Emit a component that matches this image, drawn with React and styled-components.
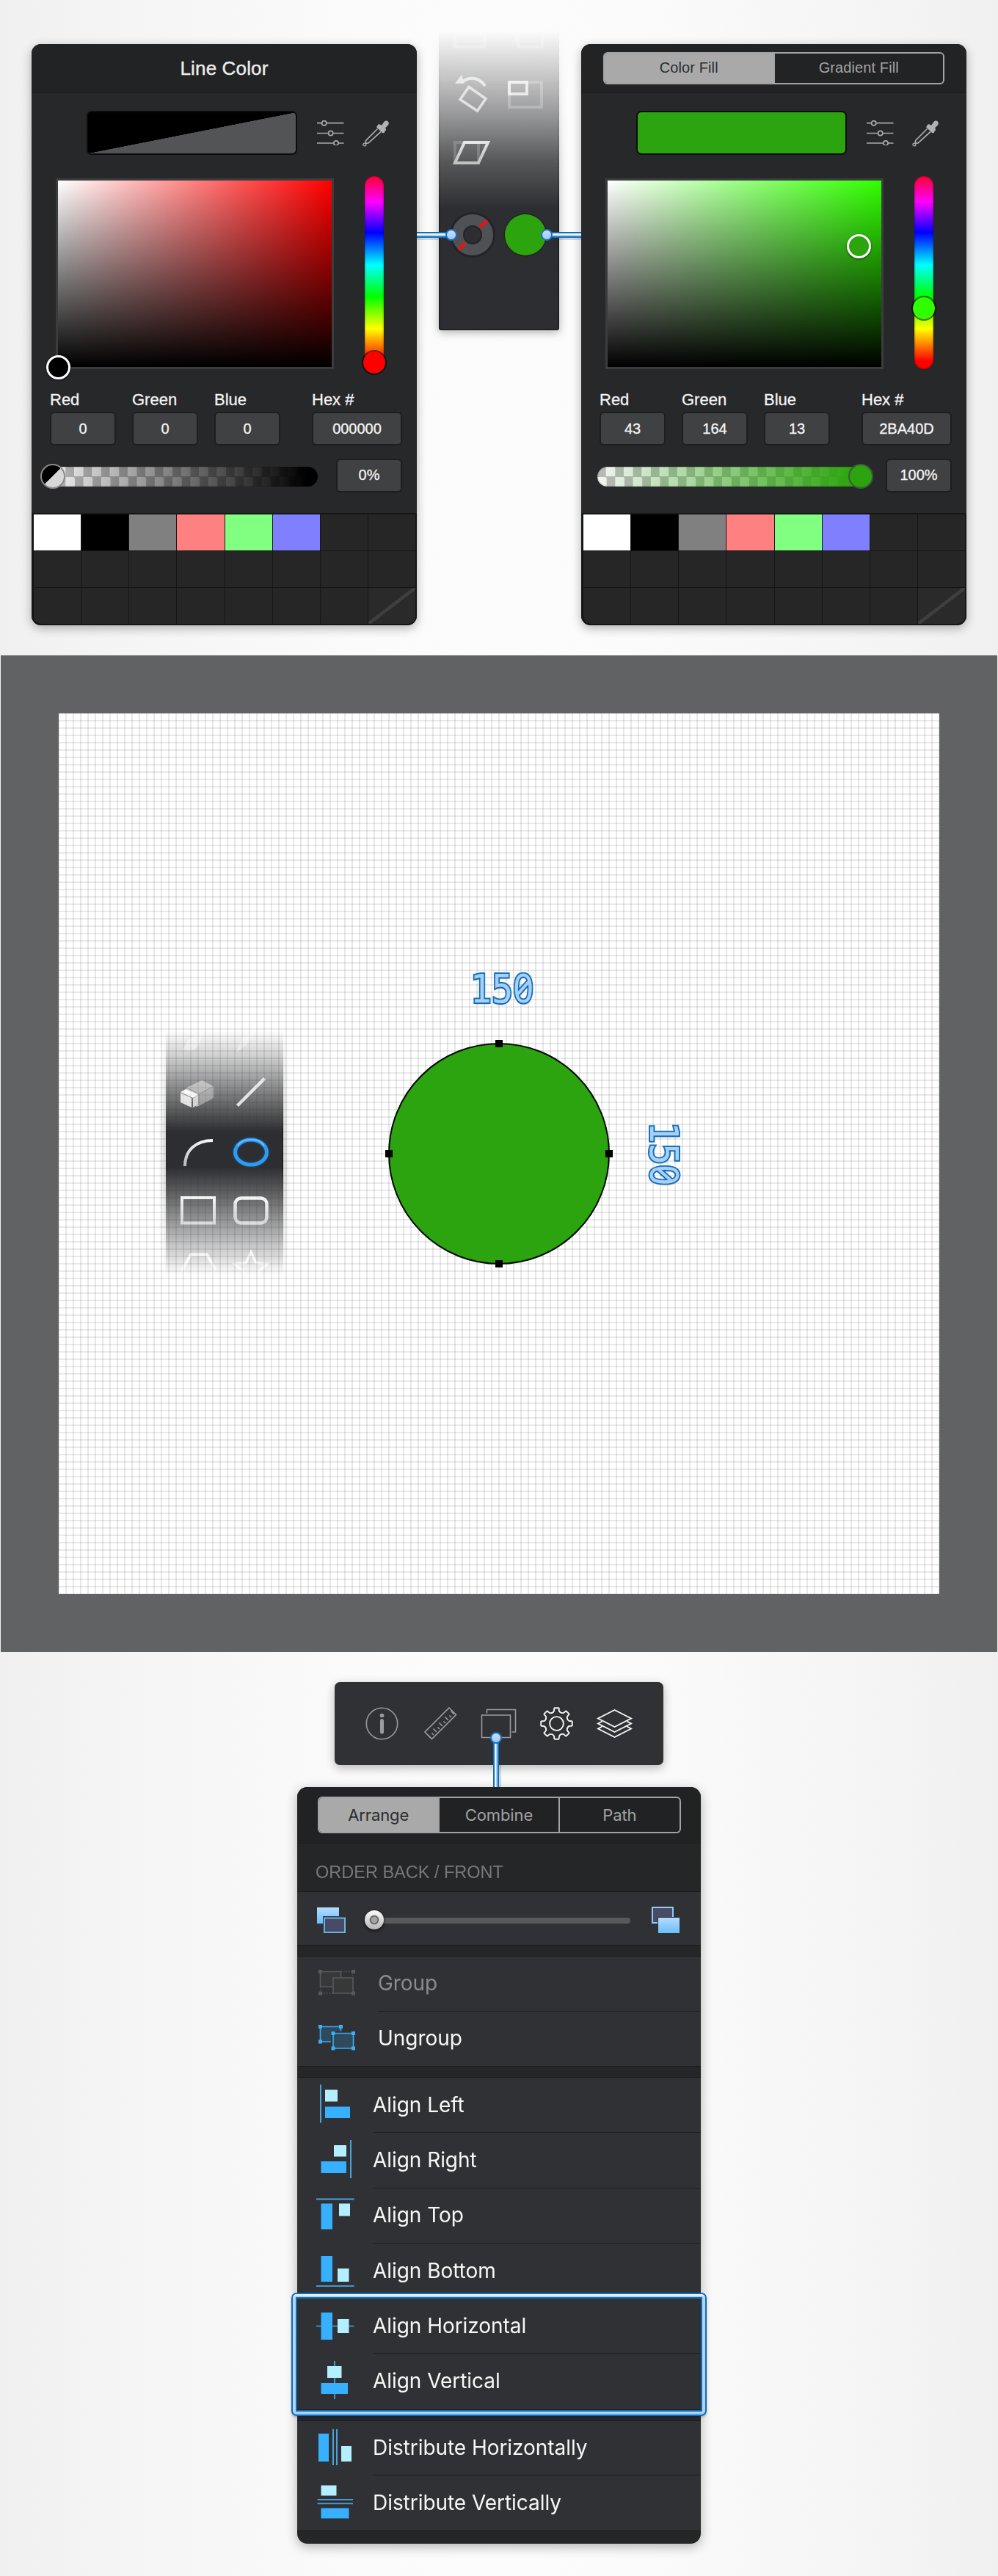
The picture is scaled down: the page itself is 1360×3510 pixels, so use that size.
import React from "react";
import styled, { createGlobalStyle } from "styled-components";

const GlobalStyle = createGlobalStyle`
  *, *::before, *::after { box-sizing: border-box; }
  body { margin: 0; background: #f4f4f4; font-family: "Liberation Sans", Arial, sans-serif; }
  svg { display: block; flex: none; }
`;

const Page = styled.main`
  width: 1360px;
  height: 3510px;
  overflow: hidden;
  display: flex;
  flex-direction: column;
  background: linear-gradient(90deg, #f0f0f0, #f4f4f4 10%, #fbfbfb 36%, #fcfcfc 50%, #fbfbfb 64%, #f4f4f4 90%, #f0f0f0);
`;

/* ---------- colour pickers ---------- */

const PickerSection = styled.section`
  position: relative;
  display: flex;
  align-items: flex-start;
  height: 893px;
  padding: 60px 43px 0;
`;

const Panel = styled.div`
  display: flex;
  flex-direction: column;
  width: 525px;
  height: 792px;
  border-radius: 13px;
  background: #27282a;
  box-shadow: 0 4px 14px rgba(0, 0, 0, 0.3);
`;

const PanelHeader = styled.header`
  display: flex;
  align-items: center;
  justify-content: center;
  height: 67px;
  border-radius: 13px 13px 0 0;
  border-bottom: 2px solid #1f2022;
  background: #222325;
  color: #ececec;
  font-size: 26px;
`;

const PanelTitle = styled.h1`
  margin: 2px 0 0;
  font-size: 26px;
  font-weight: 400;
  letter-spacing: 0.150px;
  -webkit-text-stroke: 0.400px #ececec;
`;

const Tabs = styled.div`
  display: flex;
  width: ${(p) => p.$width}px;
  height: ${(p) => p.$height}px;
  border: 2px solid #a3a3a3;
  border-radius: 6px;
  overflow: hidden;
`;

const Tab = styled.div`
  flex: 1;
  display: flex;
  align-items: center;
  justify-content: center;
  font-family: ${(p) => (p.$inter ? "Inter, sans-serif" : "inherit")};
  font-size: ${(p) => (p.$inter ? 22 : 20)}px;
  letter-spacing: ${(p) => (p.$inter ? "-0.1px" : "0.1px")};
  color: ${(p) => (p.$active ? "#2b2c2e" : "#a3a3a3")};
  background: ${(p) => (p.$active ? "#a9a9a9" : "transparent")};
  & + & { border-left: 2px solid #a3a3a3; }
`;

const SwatchRow = styled.div`
  display: flex;
  align-items: center;
  margin: 24px 0 0 75px;
  height: 60px;
`;

const Swatch = styled.div`
  width: 287px;
  height: 60px;
  margin-right: 27px;
  border: 2px solid #0c0d0e;
  border-radius: 7px;
  background: ${(p) => p.$fill};
`;

const SpectrumRow = styled.div`
  display: flex;
  align-items: center;
  height: 263px;
  margin: 29px 0 0 33px;
`;

const SatBox = styled.div`
  position: relative;
  width: 379px;
  height: 260px;
  margin: 3px 42px 0 0;
  border: 3px solid #3b3c3d;
  background: linear-gradient(to top, #000, transparent), linear-gradient(to right, #fff, ${(p) => p.$hue});
`;

const SatHandle = styled.i`
  position: absolute;
  left: ${(p) => p.$x - 16.5}px;
  top: ${(p) => p.$y - 16.5}px;
  width: 33px;
  height: 33px;
  border: 3px solid #fff;
  border-radius: 50%;
  background: ${(p) => p.$color};
  box-shadow: 0 1px 3px rgba(0, 0, 0, 0.6);
`;

const HueBar = styled.div`
  position: relative;
  width: 26px;
  height: 263px;
  border-radius: 13px;
  background: linear-gradient(to bottom, #f03 0, #f0f 35px, #00f 77px, #0ff 121px, #0f0 164px, #ff0 208px, #f00 252px);
  box-shadow: inset 0 0 3px rgba(0, 0, 0, 0.5);
`;

const HueHandle = styled.i`
  position: absolute;
  left: -4px;
  top: ${(p) => p.$y - 17}px;
  width: 34px;
  height: 34px;
  border: 2px solid rgba(0, 0, 0, 0.55);
  border-radius: 50%;
  background: ${(p) => p.$color};
  background-clip: padding-box;
`;

const FieldRow = styled.div`
  display: flex;
  gap: 22px;
  margin: 26px 0 0 25px;
  & > :last-child { margin-left: 21px; }
`;

const Field = styled.label`
  display: flex;
  flex-direction: column;
  width: ${(p) => p.$width || 90}px;
  color: #f4f4f4;
  font-size: 22px;
  line-height: 32px;
  white-space: nowrap;
  -webkit-text-stroke: 0.300px #f4f4f4;
`;

const FieldName = styled.span`
  height: 32px;
`;

const Value = styled.span`
  display: flex;
  align-items: center;
  justify-content: center;
  width: ${(p) => p.$width || 90}px;
  height: 46px;
  flex: none;
  padding-bottom: 1px;
  border: 2px solid #1d1e1f;
  border-radius: 6px;
  background: #404142;
  color: #f4f4f4;
  font-size: 20px;
  -webkit-text-stroke: 0.300px #f4f4f4;
`;

const AlphaRow = styled.div`
  display: flex;
  align-items: center;
  gap: 25px;
  margin: 18px 0 0 22px;
`;

const AlphaTrack = styled.div`
  position: relative;
  width: 368px;
  height: 27px;
  margin-top: 2px;
  border-radius: 14px;
  background:
    linear-gradient(90deg, transparent, ${(p) => p.$color} 96%),
    repeating-conic-gradient(#f4f4f4 0 25%, #b9b9b9 0 50%) 0 0 / 24.3px 27px;
  box-shadow: inset 0 0 2px rgba(0, 0, 0, 0.5);
`;

const AlphaHandle = styled.i`
  position: absolute;
  left: ${(p) => p.$x - 17}px;
  top: -4px;
  width: 34px;
  height: 34px;
  border: 2px solid ${(p) => p.$edge};
  border-radius: 50%;
  background: ${(p) => p.$fill};
`;

const Palette = styled.div`
  display: grid;
  grid-template-columns: repeat(8, 1fr);
  grid-auto-rows: 49px;
  gap: 1px;
  margin-top: 28px;
  height: 153px;
  padding: 2px 2px 2px 3px;
  overflow: hidden;
  border-radius: 0 0 13px 13px;
  background: #151617;
`;

const Cell = styled.div`
  background: ${(p) => p.$color || "#262626"};
  &:nth-child(17) { border-bottom-left-radius: 10px; }
  &:last-child { border-bottom-right-radius: 10px; }
`;

const SlidersIcon = () => (
  <svg width="37" height="34" viewBox="0 0 37 34" fill="none" stroke="#a9a9a9" strokeWidth="1.7">
    <path d="M0 3.7h6.5M13 3.7h23.5M0 17.5h15.5M22 17.5h14.5M0 31h23M29 31h7.5" />
    <circle cx="9.7" cy="3.7" r="3.1" />
    <circle cx="18.7" cy="17.5" r="3.1" />
    <circle cx="26" cy="31" r="3.1" />
  </svg>
);

const DropperIcon = () => (
  <svg width="36" height="37" viewBox="0 0 36 37">
    <path d="M20 9c1.500-4 4-2.700 6-1l3-4.500c3-4 8-1.500 6.500 3-1 2-3 3.300-4.500 5 2 2.500 1 3.500-.8 4.300.6 2.700-2.200 3.200-4 1.400L19.500 10.800c-.6-.6-.4-1.300.5-1.800z" fill="#b2b2b2" />
    <path d="M20.500 12.500L4.700 28.300l-.7 4 4-.4L25 16.500" fill="none" stroke="#a9a9a9" strokeWidth="1.7" />
    <circle cx="2.900" cy="34" r="1.900" fill="none" stroke="#a9a9a9" strokeWidth="1.400" />
  </svg>
);

const SWATCHES = ["#fff", "#000", "#808080", "#ff8080", "#80ff80", "#8080ff"];
const CELLS = Array.from({ length: 24 }, (_, i) =>
  i === 23
    ? "linear-gradient(to bottom right, #2a2a2a 47%, #3e3e3e 47%, #3e3e3e 53%, #2a2a2a 53%)"
    : SWATCHES[i]
);

function ColorPanel({ header, swatch, hue, sat, hueHandle, rgb, hex, alpha, alphaColor, alphaHandle }) {
  return (
    <Panel>
      <PanelHeader>{header}</PanelHeader>
      <SwatchRow>
        <Swatch $fill={swatch} />
        <SlidersIcon />
        <Spacer $w={25} />
        <DropperIcon />
      </SwatchRow>
      <SpectrumRow>
        <SatBox $hue={hue}>
          <SatHandle $x={sat.x} $y={sat.y} $color={sat.color} />
        </SatBox>
        <HueBar>
          <HueHandle $y={hueHandle} $color={hue} />
        </HueBar>
      </SpectrumRow>
      <FieldRow>
        {["Red", "Green", "Blue"].map((name, i) => (
          <Field key={name}>
            <FieldName>{name}</FieldName>
            <Value>{rgb[i]}</Value>
          </Field>
        ))}
        <Field $width={123}>
          <FieldName>Hex #</FieldName>
          <Value $width={123}>{hex}</Value>
        </Field>
      </FieldRow>
      <AlphaRow>
        <AlphaTrack $color={alphaColor}>
          <AlphaHandle $x={alphaHandle.x} $fill={alphaHandle.fill} $edge={alphaHandle.edge} />
        </AlphaTrack>
        <Value>{alpha}</Value>
      </AlphaRow>
      <Palette>
        {CELLS.map((c, i) => (
          <Cell key={i} $color={c} />
        ))}
      </Palette>
    </Panel>
  );
}

const Spacer = styled.span`
  width: ${(p) => p.$w}px;
  flex: none;
`;

const ToolStrip = styled.div`
  width: 192px;
  height: 432px;
  margin: -20px 16px 0;
  padding: 0 14px 22px;
  mask-image: linear-gradient(to bottom, transparent 2px, rgba(0, 0, 0, 0.2) 50px, rgba(0, 0, 0, 0.48) 115px, rgba(0, 0, 0, 0.8) 180px, #000 245px);
`;

const StripBody = styled.div`
  height: 410px;
  border: 2px solid #1f2022;
  border-radius: 0 0 3px 3px;
  background: #2d2e31;
  box-shadow: 0 3px 12px rgba(0, 0, 0, 0.3);
`;

const Connector = styled.i`
  position: absolute;
  left: ${(p) => p.$x}px;
  top: ${(p) => p.$y}px;
  width: ${(p) => (p.$vertical ? 8 : p.$length)}px;
  height: ${(p) => (p.$vertical ? p.$length : 8)}px;
  background: linear-gradient(
    ${(p) => (p.$vertical ? "to right" : "to bottom")},
    #0f6eb8 2px, #eef6ff 2px, #eef6ff 4px, #a9cff8 4px, #a9cff8 6px, #0f6eb8 6px
  );
  box-shadow: ${(p) => (p.$vertical ? "3px 0" : "0 3px")} 0 rgba(20, 60, 110, 0.18);
  &::after {
    content: "";
    position: absolute;
    width: 16px;
    height: 16px;
    border: 2.500px solid #1573bd;
    border-radius: 50%;
    background: linear-gradient(#c9defb, #a3c8f7);
    ${(p) => (p.$dot === "right" ? "right: -7px; top: -4px;" : "")}
    ${(p) => (p.$dot === "left" ? "left: -7px; top: -4px;" : "")}
    ${(p) => (p.$dot === "top" ? "left: -4px; top: -8px;" : "")}
  }
`;

const TransformTools = () => (
  <svg width="160" height="406" viewBox="600 42 160 406" fill="none">
    <defs>
      <linearGradient id="metal" x1="0" y1="0" x2="0" y2="1">
        <stop offset="0" stopColor="#f6f6f6" />
        <stop offset="1" stopColor="#c4c4c4" />
      </linearGradient>
    </defs>
    <path d="M620 46h40v18h-40z M701 46l6 18 M707 44h32v20h-32z" stroke="#fff" strokeOpacity=".3" strokeWidth="4" />
    <g opacity=".75">
      <path d="M629 112c12-9 24-6 32 5" stroke="#f2f2f2" strokeWidth="4" />
      <path d="M629 102l4 11.500-13 .5z" fill="#f2f2f2" />
      <path d="M639 118.500l23 16-11.500 16.500-23.500-15.500z" stroke="#eee" strokeWidth="3.500" />
    </g>
    <path d="M694 112h44v34h-44z" stroke="#c0c0c0" strokeOpacity=".35" strokeWidth="4" />
    <path d="M694 112h24v16h-24z" stroke="#fff" strokeOpacity=".75" strokeWidth="4" />
    <path d="M620 194h32v28h-32z" stroke="#999" strokeOpacity=".35" strokeWidth="4" />
    <path d="M633 194h32l-13 28h-32z" stroke="url(#metal)" strokeOpacity=".85" strokeWidth="4" />
    <circle cx="644" cy="320" r="21" stroke="#232427" strokeWidth="20" />
    <circle cx="644" cy="320" r="20.500" stroke="#505154" strokeWidth="15" />
    <path d="M625 340l9-9M654 310l10-10" stroke="#e81414" strokeWidth="4.500" />
    <circle cx="716" cy="320" r="29.500" fill="#232427" />
    <circle cx="716" cy="320" r="28" fill="#2ba40d" />
  </svg>
);

/* ---------- drawing canvas ---------- */

const Workspace = styled.section`
  margin: 0 1px;
  height: 1358px;
  padding: 79px;
  background: #616264;
`;

const Artboard = styled.div`
  position: relative;
  width: 1200px;
  height: 1200px;
  background:
    linear-gradient(90deg, rgba(0, 0, 0, 0.095) 2px, transparent 2px) 9px 9px / 10px 10px,
    linear-gradient(rgba(0, 0, 0, 0.085) 2px, transparent 2px) 9px 9px / 10px 10px,
    #fff;
`;

const ShapeStrip = styled.div`
  position: absolute;
  left: 132px;
  top: 428px;
  width: 188px;
  height: 342px;
  padding: 0 14px;
  mask-image: linear-gradient(to bottom, transparent 4px, rgba(0, 0, 0, 0.22) 38px, rgba(0, 0, 0, 0.6) 88px, #000 142px, #000 190px, rgba(0, 0, 0, 0.65) 242px, rgba(0, 0, 0, 0.25) 300px, transparent 338px);
`;

const ShapeStripBody = styled.div`
  height: 342px;
  background: #2d2e31;
  box-shadow: 0 0 10px rgba(0, 0, 0, 0.35), inset -2px 0 #1f2022;
`;

const ShapeTools = () => (
  <svg width="160" height="342" viewBox="226 1400 160 342" fill="none">
    <defs>
      <linearGradient id="steel" x1="0" y1="0" x2="0" y2="1">
        <stop offset="0" stopColor="#f4f4f4" />
        <stop offset="1" stopColor="#b8b8b8" />
      </linearGradient>
      <filter id="glow" x="-30%" y="-30%" width="160%" height="160%">
        <feDropShadow dx="0" dy="0" stdDeviation="1.5" floodColor="#1e8fff" floodOpacity=".45" />
      </filter>
    </defs>
    <path d="M248 1429c6 0 3-10 13-15l17-12-6 19c-3 10-14 13-24 8z" fill="#fff" opacity=".45" />
    <path d="M322 1434l8-21 18-9-9 17z" fill="#fff" opacity=".4" />
    <path d="M254 1482l21-10 16 8-20 11z" fill="#8a8a8c" />
    <path d="M254 1482l17 9v16l-4 1v-12l-13-8z" fill="#9a9a9c" />
    <path d="M271 1491l20-11v16l-20 11z" fill="#77777a" />
    <path d="M254 1482l17 9 20-11M271 1491v15" stroke="#4b4b4e" strokeWidth="1" />
    <path d="M246 1488l7-4 17 7-7 5z" fill="#f4f4f4" />
    <path d="M246 1489l15 7v13l-15-7z" fill="#dcdcdc" />
    <path d="M263 1496.500l7-4v12.500l-7 4z" fill="#c4c4c4" />
    <path d="M323.500 1506.500l37-37" stroke="#dadada" strokeWidth="4.500" />
    <path d="M252 1589c0-22 15-35 38-35" stroke="url(#steel)" strokeWidth="4" />
    <ellipse cx="342" cy="1570" rx="21.500" ry="17" stroke="#2c9cf5" strokeWidth="5" filter="url(#glow)" />
    <path d="M324 1561c7-11 29-11 36 0" stroke="#7cc4fb" strokeWidth="1.500" />
    <path d="M248 1632h44v34.500h-44z" stroke="url(#steel)" strokeWidth="4" />
    <rect x="320.500" y="1632.500" width="43" height="34" rx="8" stroke="url(#steel)" strokeWidth="4.500" />
    <g stroke="#fff" strokeOpacity=".85">
      <path d="M249 1729l11-19.500h22l11 19.500-11 20h-22z" strokeWidth="4" />
      <path d="M342 1706l7 15 15 1.500-12 10 4 14-14-8-14 8 4-14-12-10 15-1.500z" strokeWidth="3.500" />
    </g>
  </svg>
);

const Circle = styled.div`
  position: absolute;
  left: 449px;
  top: 449px;
  width: 302px;
  height: 302px;
  border: 2px solid #050805;
  border-radius: 50%;
  background: #2ba40f;
`;

const Anchor = styled.i`
  position: absolute;
  left: ${(p) => p.$x - 5}px;
  top: ${(p) => p.$y - 5}px;
  width: 10px;
  height: 10px;
  background: #000;
`;

const Dimension = styled.div`
  position: absolute;
  left: ${(p) => p.$x}px;
  top: ${(p) => p.$y}px;
  width: 120px;
  height: 60px;
  line-height: 60px;
  text-align: center;
  transform: ${(p) => (p.$vertical ? "rotate(90deg)" : "none")} scaleX(0.900);
  transform: ${(p) => (p.$vertical ? "rotate(90deg) scaleX(0.9)" : "scaleX(0.9)")};
  color: #a6d0f8;
  font-family: "DejaVu Sans Mono", monospace;
  font-size: 54px;
  -webkit-text-stroke: 4px #1573bd;
  paint-order: stroke fill;
  text-shadow: ${(p) => (p.$vertical ? "3px 0" : "0 3px")} 1px rgba(30, 60, 100, 0.18);
`;

const Zero = styled.span`
  font-family: "Noto Sans", sans-serif;
  font-feature-settings: "zero";
`;

/* ---------- arrange panel ---------- */

const ArrangeSection = styled.section`
  position: relative;
  display: flex;
  flex-direction: column;
  align-items: center;
  padding-top: 41px;
`;

const Toolbar = styled.div`
  display: flex;
  align-items: center;
  width: 448px;
  height: 113px;
  border-radius: 7px;
  background: #303134;
  box-shadow: 0 4px 14px rgba(0, 0, 0, 0.28);
`;

const gearPath = (() => {
  const pt = (r, deg) => {
    const a = (deg * Math.PI) / 180;
    return `${(r * Math.sin(a)).toFixed(2)} ${(-r * Math.cos(a)).toFixed(2)}`;
  };
  let d = "";
  for (let i = 0; i < 8; i++) {
    const a = i * 45;
    d += `${i ? "L" : "M"}${pt(17.2, a - 12)}L${pt(18, a - 11)}L${pt(20.8, a - 9)}Q${pt(21.6, a - 8)} ${pt(21.4, a - 6)}`;
    d += `L${pt(21.4, a + 6)}Q${pt(21.6, a + 8)} ${pt(20.8, a + 9)}L${pt(17.6, a + 11)}Q${pt(14.6, a + 22.5)} ${pt(17.4, a + 33)}`;
  }
  return d + "Z";
})();

const ToolbarIcons = () => (
  <svg width="448" height="113" viewBox="456 2292 448 113" fill="none" stroke="#9b9b9d" strokeWidth="1.600">
    <circle cx="520.500" cy="2348.500" r="21.200" />
    <circle cx="520.500" cy="2337.500" r="2.800" fill="#9b9b9d" stroke="none" />
    <rect x="518" y="2342" width="5" height="20.500" rx="2.500" fill="#9b9b9d" stroke="none" />
    <path d="M612 2327l9.500 9.500-33 33-9.500-9.500z" />
    <path d="M585.500 2366.500l-3.500-3.500M589.500 2362.500l-2.500-2.500M593.500 2358.500l-4.500-4.500M597.500 2354.500l-2.500-2.500M601.500 2350.500l-4.500-4.500M605.500 2346.500l-2.500-2.500M609.500 2342.500l-4.500-4.500M613.500 2338.500l-2.500-2.500M617.500 2334.500l-4.500-4.500" transform="translate(1.500 1.500)" />
    <path d="M656.500 2337h39v30.500h-39z" />
    <path d="M663.500 2334.500v-5h39v30.500h-5" />
    <g stroke="#f6f6f6" strokeWidth="1.900">
      <path d={gearPath} transform="translate(758.500 2348.500)" />
      <circle cx="758.500" cy="2348.500" r="9.400" />
      <path d="M837.500 2330l22.500 11.500-22.500 11.500-22.500-11.500z" />
      <path d="M820.500 2345.500l-5.500 3 22.500 11.500 22.500-11.500-5.500-3M820.500 2352.500l-5.500 3 22.500 11.500 22.500-11.500-5.500-3" />
    </g>
  </svg>
);

const ArrangePanel = styled.div`
  display: flex;
  flex-direction: column;
  width: 550px;
  height: 1031px;
  margin-top: 30px;
  overflow: hidden;
  border-radius: 14px;
  background: #252628;
`;

const PanelShadow = styled.div`
  border-radius: 14px;
  filter: drop-shadow(0 4px 8px rgba(0, 0, 0, 0.3));
`;

const ArrangeHeader = styled.header`
  display: flex;
  justify-content: center;
  height: 77px;
  flex: none;
  padding-top: 13px;
  border-bottom: 1px solid #1c1d1e;
  background: #212224;
`;

const SectionLabel = styled.h2`
  margin: 0;
  height: 65px;
  flex: none;
  padding: 13px 0 0 25px;
  color: #77787b;
  font-size: 23.500px;
  font-weight: 400;
  line-height: 52px;
`;

const OrderRow = styled.div`
  display: flex;
  align-items: center;
  height: 74px;
  flex: none;
  padding: 4px 0 0 27px;
  border-top: 1px solid #1b1c1d;
  border-bottom: 1px solid #1b1c1d;
  background: #303134;
`;

const OrderTrack = styled.div`
  position: relative;
  width: 361px;
  height: 8px;
  margin: 2px 29px 0 27px;
  border-radius: 4px;
  background: #58595a;
`;

const OrderKnob = styled.i`
  position: absolute;
  left: -1px;
  top: -10px;
  width: 26px;
  height: 26px;
  border-radius: 50%;
  background: radial-gradient(circle, #a4a4a4 4px, #555 5px, #666 5.500px, transparent 7px), linear-gradient(#fcfcfc, #b5b5b5);
  box-shadow: 0 2px 4px rgba(0, 0, 0, 0.7);
`;

const OrderIcon = ({ front }) => (
  <svg width="39" height="38" viewBox="0 0 39 38">
    <defs>
      <linearGradient id="sky" x1="0" y1="0" x2="0" y2="1">
        <stop offset="0" stopColor="#b4dcff" />
        <stop offset="1" stopColor="#6abdfb" />
      </linearGradient>
    </defs>
    {front ? (
      <>
        <rect x="1" y="2" width="28" height="21" fill="#484b68" stroke="#8ecbf5" strokeWidth="2" />
        <path d="M8 15h31v23H8z" fill="#303134" />
        <path d="M9 16h29v21H9z" fill="url(#sky)" />
      </>
    ) : (
      <>
        <path d="M0 2h30v22H0z" fill="url(#sky)" />
        <path d="M8 14h31v24H8z" fill="#303134" />
        <rect x="10" y="16.500" width="28" height="19.500" fill="#484b68" stroke="#69b4dd" strokeWidth="2" />
      </>
    )}
  </svg>
);

const Band = styled.div`
  height: 14px;
  flex: none;
`;

const Group = styled.div`
  flex: none;
  background: #303134;
  border-top: 1px solid #1b1c1d;
  border-bottom: 1px solid #1b1c1d;
`;

const Item = styled.div`
  display: flex;
  height: ${(p) => p.$height}px;
  padding-left: 20px;
`;

const ItemText = styled.div`
  flex: 1;
  display: flex;
  align-items: center;
  margin-left: ${(p) => (p.$wide ? 30 : 23)}px;
  padding: 0 0 1px 0;
  border-bottom: 1.500px solid ${(p) => (p.$last ? "transparent" : "#1e1f22")};
  color: ${(p) => (p.$muted ? "#8a8b8e" : "#f7f7f7")};
  font-family: Inter, sans-serif;
  font-size: 28px;
  letter-spacing: -0.050px;
  white-space: nowrap;
`;

const BLUE = "#36b0ff";
const PALE = "#b4efff";
const LINE = "#4aa3dc";
const R = ({ b, c }) => <rect x={b[0] - 425} y={b[1]} width={b[2] - b[0]} height={b[3] - b[1]} fill={c} />;

/* Each entry lists [x1, y1, x2, y2] boxes and their colour. */
const ICONS = {
  left: [[[436, 9.5, 438, 61.5], LINE], [[443, 16.5, 460, 32.5], PALE], [[443, 39.5, 477, 55], BLUE]],
  right: [[[455, 17, 472, 32.5], PALE], [[437.5, 39, 472, 55], BLUE], [[477, 10, 479, 62], LINE]],
  top: [[[431, 13.5, 482.5, 15.5], LINE], [[437.5, 20.5, 453, 55.5], BLUE], [[462, 20.5, 477, 37.5], PALE]],
  bottom: [[[437.5, 17, 453, 52], BLUE], [[460, 34, 475.5, 52], PALE], [[431, 57, 482.5, 58.8], LINE]],
  horizontal: [[[431, 36.7, 482.5, 38.2], LINE], [[437.5, 19, 453, 56], BLUE], [[460, 28, 475.5, 47], PALE]],
  vertical: [[[455, 10, 456.8, 62], LINE], [[446, 17, 465.5, 33], PALE], [[437.5, 40, 474, 55], BLUE]],
  distH: [[[434, 17, 448, 55], BLUE], [[453, 11, 455, 60], LINE], [[458, 11, 460, 60], LINE], [[465, 34, 479, 55], PALE]],
  distV: [[[437.5, 13.5, 458.5, 27.5], PALE], [[432.5, 32, 481, 33.7], LINE], [[432.5, 37.5, 481, 39.2], LINE], [[437.5, 44.5, 475.5, 58.5], BLUE]],
};

const BoxIcon = ({ name }) => (
  <svg width="60" height="75" viewBox="0 0 60 75">
    {ICONS[name].map(([b, c], i) => (
      <R key={i} b={b} c={c} />
    ))}
  </svg>
);

const corners = (pts, c) => pts.map(([x, y]) => <rect key={`${x}-${y}`} x={x - 2.5} y={y - 2.5} width="5" height="5" fill={c} />);

const GroupIcon = () => (
  <svg width="60" height="75" viewBox="0 0 60 75" fill="#37383a" stroke="#58595b" strokeWidth="1.600">
    <path d="M11.500 20.500h28v20.500h-28z" />
    <path d="M39.500 20.500h16v6M11.500 41v9h17" fill="none" strokeDasharray="1.500 2" />
    <path d="M29 29h27v21h-27z" />
    <g stroke="none">{corners([[11.5, 20.5], [56.5, 20.5], [11.5, 50], [56.5, 50]], "#58595b")}</g>
  </svg>
);

const UngroupIcon = () => (
  <svg width="60" height="75" viewBox="0 0 60 75" fill="#2f4a5c" stroke="#3ba9ee" strokeWidth="1.700">
    <path d="M11.500 20.500h28v20.500h-28z" />
    <path d="M26 26.500h34v30h-34z" fill="#303134" stroke="none" />
    <path d="M29 29.500h27.500v20.500h-27.500z" />
    <g stroke="none">
      {corners([[11.5, 20.5], [39.5, 20.5], [11.5, 41], [29, 29.5], [56.5, 29.5], [29, 50], [56.5, 50]], "#3bb0fa")}
    </g>
  </svg>
);

const Highlight = styled.div`
  position: absolute;
  left: 397px;
  top: 873px;
  width: 566px;
  height: 168px;
  border: 2px solid #0f6eb8;
  border-radius: 7px;
  box-shadow: inset 0 2px #eff7ff, inset 0 -2px #9ecbf6, inset 0 0 0 4px #b4d5f9, inset 0 0 0 6px #0f6eb8, 0 2px 3px rgba(0, 30, 70, 0.25);
`;

const ALIGN = [
  ["left", "Align Left"],
  ["right", "Align Right"],
  ["top", "Align Top"],
  ["bottom", "Align Bottom"],
  ["horizontal", "Align Horizontal"],
  ["vertical", "Align Vertical"],
];
const DISTRIBUTE = [
  ["distH", "Distribute Horizontally"],
  ["distV", "Distribute Vertically"],
];

const ItemList = ({ items, height }) => (
  <Group>
    {items.map(([icon, label], i) => (
      <Item key={icon} $height={height}>
        <BoxIcon name={icon} />
        <ItemText $last={i === items.length - 1}>{label}</ItemText>
      </Item>
    ))}
  </Group>
);

const Digits = () => (
  <>
    15<Zero>0</Zero>
  </>
);

export default function App() {
  return (
    <Page>
      <GlobalStyle />
      <PickerSection>
        <ColorPanel
          header={<PanelTitle>Line Color</PanelTitle>}
          swatch="linear-gradient(to bottom right, #000 50%, #535455 50.300%)"
          hue="#ff0000"
          sat={{ x: 0.5, y: 254.5, color: "#000" }}
          hueHandle={254}
          rgb={[0, 0, 0]}
          hex="000000"
          alpha="0%"
          alphaColor="#000"
          alphaHandle={{ x: 7, fill: "linear-gradient(135deg, #000 49%, #d8d8d8 50%)", edge: "#8b8b8b" }}
        />
        <ToolStrip>
          <StripBody>
            <TransformTools />
          </StripBody>
        </ToolStrip>
        <ColorPanel
          header={
            <Tabs $width={465} $height={44}>
              <Tab $active>Color Fill</Tab>
              <Tab>Gradient Fill</Tab>
            </Tabs>
          }
          swatch="#2ba40f"
          hue="#30ff00"
          sat={{ x: 342, y: 89.5, color: "#2ba40d" }}
          hueHandle={180}
          rgb={[43, 164, 13]}
          hex="2BA40D"
          alpha="100%"
          alphaColor="#2ba40d"
          alphaHandle={{ x: 359, fill: "#2ba40d", edge: "#3f5a3a" }}
        />
        <Connector $x={568} $y={316} $length={48} $dot="right" />
        <Connector $x={744} $y={316} $length={48} $dot="left" />
      </PickerSection>

      <Workspace>
        <Artboard>
          <ShapeStrip>
            <ShapeStripBody>
              <ShapeTools />
            </ShapeStripBody>
          </ShapeStrip>
          <Circle />
          <Anchor $x={600} $y={450} />
          <Anchor $x={450} $y={600} />
          <Anchor $x={750} $y={600} />
          <Anchor $x={600} $y={750} />
          <Dimension $x={544} $y={343}><Digits /></Dimension>
          <Dimension $x={767} $y={570} $vertical><Digits /></Dimension>
        </Artboard>
      </Workspace>

      <ArrangeSection>
        <Toolbar>
          <ToolbarIcons />
        </Toolbar>
        <PanelShadow>
          <ArrangePanel>
            <ArrangeHeader>
              <Tabs $width={495} $height={50}>
                <Tab $inter $active>Arrange</Tab>
                <Tab $inter>Combine</Tab>
                <Tab $inter>Path</Tab>
              </Tabs>
            </ArrangeHeader>
            <SectionLabel>ORDER BACK / FRONT</SectionLabel>
            <OrderRow>
              <OrderIcon />
              <OrderTrack>
                <OrderKnob />
              </OrderTrack>
              <OrderIcon front />
            </OrderRow>
            <Band />
            <Group>
              <Item $height={74.5}>
                <GroupIcon />
                <ItemText $wide $muted>Group</ItemText>
              </Item>
              <Item $height={74.5}>
                <UngroupIcon />
                <ItemText $wide $last>Ungroup</ItemText>
              </Item>
            </Group>
            <Band />
            <ItemList items={ALIGN} height={75.3} />
            <Band />
            <ItemList items={DISTRIBUTE} height={74.5} />
          </ArrangePanel>
        </PanelShadow>
        <Connector $x={672} $y={117} $length={67} $vertical $dot="top" />
        <Highlight />
      </ArrangeSection>
    </Page>
  );
}
